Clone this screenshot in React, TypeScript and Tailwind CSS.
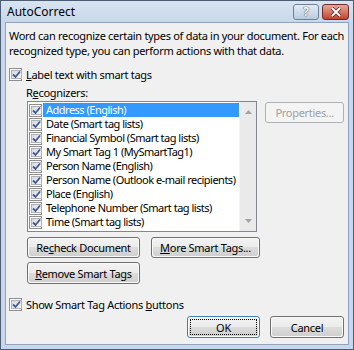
import React from 'react';

const items = [
  'Address (English)',
  'Date (Smart tag lists)',
  'Financial Symbol (Smart tag lists)',
  'My Smart Tag 1 (MySmartTag1)',
  'Person Name (English)',
  'Person Name (Outlook e-mail recipients)',
  'Place (English)',
  'Telephone Number (Smart tag lists)',
  'Time (Smart tag lists)',
];

function CheckBox() {
  return (
    <span className="w-[13px] h-[13px] shrink-0 border border-[#8f8f8f] bg-white p-[1px] flex">
      <span className="flex-1 border border-[#aeb3b9] bg-gradient-to-br from-[#d6d9de] to-[#f8f8f8] flex items-center justify-center">
        <svg width="9" height="9" viewBox="0 0 9 9">
          <path d="M1 4.5 L3.5 7 L8 1.5" fill="none" stroke="#42579a" strokeWidth="1.8" />
        </svg>
      </span>
    </span>
  );
}

function Button({ children, className = '', disabled = false, primary = false }: { children: React.ReactNode; className?: string; disabled?: boolean; primary?: boolean }) {
  if (disabled) {
    return (
      <div className={`border border-[#adb2b5] rounded-[3px] bg-[#f4f4f4] text-[#a0a0a0] flex items-center justify-center whitespace-nowrap ${className}`}>
        {children}
      </div>
    );
  }
  return (
    <div className={`border rounded-[3px] p-[1px] ${primary ? 'border-[#3c7fb1]' : 'border-[#707070]'} bg-white/60 ${className}`}>
      <div className={`h-full w-full rounded-[2px] bg-[linear-gradient(#f2f2f2_0%,#ebebeb_50%,#dddddd_50%,#cfcfcf_100%)] flex items-center justify-center whitespace-nowrap text-black ${primary ? 'outline-1 outline-dotted outline-black -outline-offset-2' : ''}`}>
        {children}
      </div>
    </div>
  );
}

export default function App() {
  return (
    <div className="w-[354px] h-[350px] bg-[#c8d7eb] border border-[#4f5d73] flex flex-col font-['Segoe_UI','Noto_Sans',sans-serif] text-[11px] tracking-[-0.3px] leading-[15px] text-black overflow-hidden">
      {/* title bar */}
      <div className="h-[21px] shrink-0 flex items-center pl-[6px] pr-[4px] bg-gradient-to-b from-[#d9e4f2] to-[#c8d7eb]">
        <span className="text-[12px] tracking-normal flex-1">AutoCorrect</span>
        <div className="w-[26px] h-[16px] rounded-[3px] border border-[#6e7f98] bg-gradient-to-b from-[#e4ebf5] to-[#b9cbe2] flex items-center justify-center text-white font-bold text-[12px] [text-shadow:0_0_1px_#2f3d52,0_0_1px_#2f3d52]">
          ?
        </div>
        <div className="w-[27px] h-[16px] ml-[3px] rounded-[3px] border border-[#6e2d24] bg-gradient-to-b from-[#e8a797] to-[#c0432e] flex items-center justify-center">
          <svg width="12" height="10" viewBox="0 0 12 10">
            <path d="M2 1 L10 9 M10 1 L2 9" stroke="#5a1e16" strokeWidth="3.4" />
            <path d="M2 1 L10 9 M10 1 L2 9" stroke="white" strokeWidth="2" />
          </svg>
        </div>
      </div>

      {/* client area */}
      <div className="flex-1 mx-[4px] mb-[4px] border border-[#8ea3bd] bg-[#f0f0f0] flex flex-col pl-[3px] pr-[4px] pt-[5px]">
        <p className="whitespace-nowrap">
          Word can recognize certain types of data in your document. For each
          <br />
          recognized type, you can perform actions with that data.
        </p>

        <div className="mt-[9px] h-[15px] flex items-center">
          <CheckBox />
          <span className="ml-[4px]"><u>L</u>abel text with smart tags</span>
        </div>

        <div className="mt-[3px] pl-[17px]">R<u>e</u>cognizers:</div>

        <div className="mt-[1px] flex items-start pl-[18px]">
          <div className="w-[231px] h-[131px] border border-[#828790] bg-white flex">
            <div className="flex-1 pt-[1px] overflow-hidden tracking-[-0.5px]">
              {items.map((it, i) => (
                <div key={it} className="h-[14px] flex items-center">
                  <span className="ml-[1px]"><CheckBox /></span>
                  <span className={`ml-[1px] flex-1 h-[14px] leading-[14px] pl-[3px] whitespace-nowrap ${i === 0 ? 'bg-[#3399ff] text-white' : ''}`}>
                    {it}
                  </span>
                </div>
              ))}
            </div>
            <div className="w-[17px] shrink-0 bg-[#eaeaea] border-l border-[#f5f5f5] flex flex-col items-center justify-between py-[8px]">
              <svg width="7" height="4" viewBox="0 0 7 4"><path d="M0 4 L3.5 0 L7 4 Z" fill="#a3a3a3" /></svg>
              <svg width="7" height="4" viewBox="0 0 7 4"><path d="M0 0 L3.5 4 L7 0 Z" fill="#a3a3a3" /></svg>
            </div>
          </div>
          <Button disabled className="ml-[8px] mt-[1px] w-[79px] h-[21px]">Properties...</Button>
        </div>

        <div className="mt-[5px] pl-[18px] flex">
          <Button className="w-[113px] h-[21px]">Re<u>c</u>heck Document</Button>
          <Button className="ml-[11px] w-[109px] h-[21px]"><u>M</u>ore Smart Tags...</Button>
        </div>
        <div className="mt-[4px] pl-[18px] flex">
          <Button className="w-[113px] h-[22px]"><u>R</u>emove Smart Tags</Button>
        </div>

        <div className="mt-[13px] h-[15px] flex items-center">
          <CheckBox />
          <span className="ml-[4px]">Show Smart Tag Actions <u>b</u>uttons</span>
        </div>

        <div className="mt-[4px] flex justify-end">
          <Button primary className="w-[73px] h-[22px]">OK</Button>
          <Button className="ml-[10px] w-[74px] h-[22px]">Cancel</Button>
        </div>
      </div>
    </div>
  );
}
